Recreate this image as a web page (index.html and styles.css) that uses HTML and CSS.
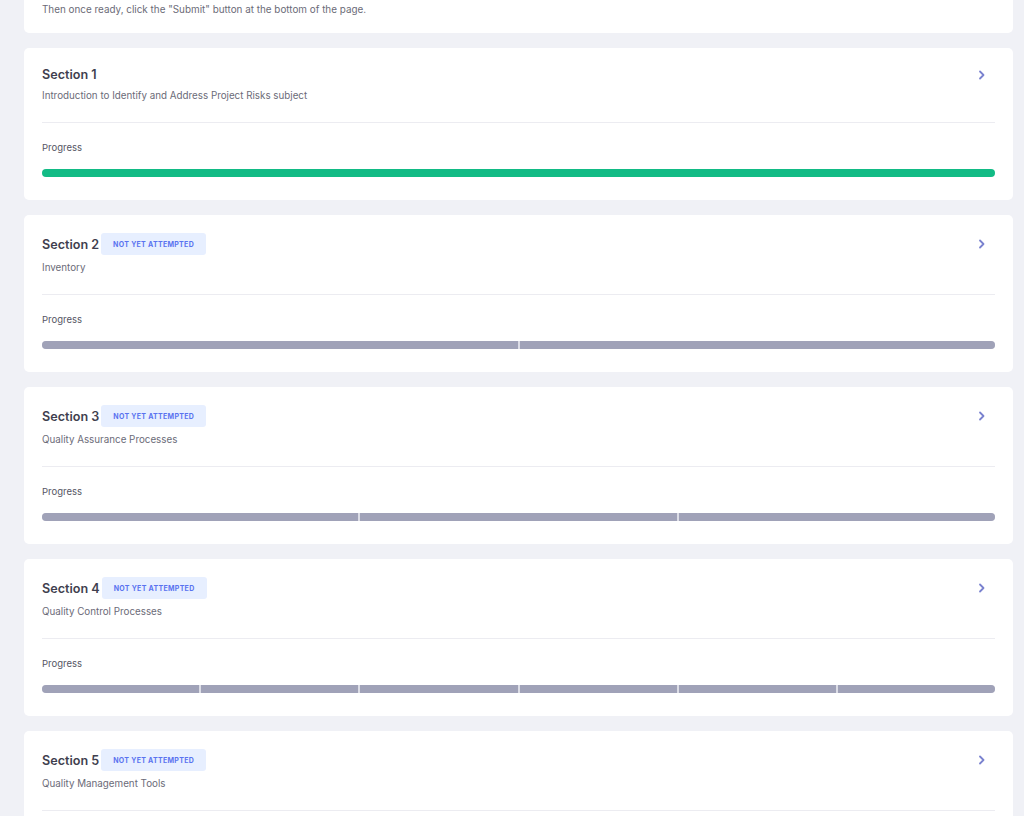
FILE: index.html
```html
<!DOCTYPE html>
<html>
<head>
  <meta charset="utf-8">
  <title>Sections</title>
  <link rel="stylesheet" href="styles.css">
</head>
<body>
<main class="page">

  <div class="card intro">
    <p>Then once ready, click the "Submit" button at the bottom of the page.</p>
  </div>

  <div class="card section">
    <div class="section-head">
      <h3>Section 1</h3>
      <svg class="chevron" viewBox="0 0 8 10" width="8" height="10"><path d="M2 1.5 L5.5 5 L2 8.5"/></svg>
    </div>
    <p class="section-sub">Introduction to Identify and Address Project Risks subject</p>
    <hr>
    <div class="progress-label">Progress</div>
    <div class="bar">
      <span class="seg done"></span>
    </div>
  </div>

  <div class="card section">
    <div class="section-head">
      <h3>Section 2</h3>
      <span class="badge">Not yet attempted</span>
      <svg class="chevron" viewBox="0 0 8 10" width="8" height="10"><path d="M2 1.5 L5.5 5 L2 8.5"/></svg>
    </div>
    <p class="section-sub">Inventory</p>
    <hr>
    <div class="progress-label">Progress</div>
    <div class="bar">
      <span class="seg"></span><span class="seg"></span>
    </div>
  </div>

  <div class="card section">
    <div class="section-head">
      <h3>Section 3</h3>
      <span class="badge">Not yet attempted</span>
      <svg class="chevron" viewBox="0 0 8 10" width="8" height="10"><path d="M2 1.5 L5.5 5 L2 8.5"/></svg>
    </div>
    <p class="section-sub">Quality Assurance Processes</p>
    <hr>
    <div class="progress-label">Progress</div>
    <div class="bar">
      <span class="seg"></span><span class="seg"></span><span class="seg"></span>
    </div>
  </div>

  <div class="card section">
    <div class="section-head">
      <h3>Section 4</h3>
      <span class="badge">Not yet attempted</span>
      <svg class="chevron" viewBox="0 0 8 10" width="8" height="10"><path d="M2 1.5 L5.5 5 L2 8.5"/></svg>
    </div>
    <p class="section-sub">Quality Control Processes</p>
    <hr>
    <div class="progress-label">Progress</div>
    <div class="bar">
      <span class="seg"></span><span class="seg"></span><span class="seg"></span>
      <span class="seg"></span><span class="seg"></span><span class="seg"></span>
    </div>
  </div>

  <div class="card section">
    <div class="section-head">
      <h3>Section 5</h3>
      <span class="badge">Not yet attempted</span>
      <svg class="chevron" viewBox="0 0 8 10" width="8" height="10"><path d="M2 1.5 L5.5 5 L2 8.5"/></svg>
    </div>
    <p class="section-sub">Quality Management Tools</p>
    <hr>
  </div>

</main>
</body>
</html>
```

FILE: styles.css
```css
* { box-sizing: border-box; }

html, body { margin: 0; padding: 0; }

body {
  background: #f0f1f6;
  font-family: Inter, "Noto Sans", sans-serif;
  color: #3f3f4f;
}

.page {
  display: flex;
  flex-direction: column;
  gap: 15px;
  padding: 0 11px 40px 24px;
}

.card {
  background: #fff;
  border-radius: 5px;
}

/* intro card is scrolled partly out of view */
.intro {
  padding: 2px 18px 17px;
  border-top-left-radius: 0;
  border-top-right-radius: 0;
}
.intro p {
  margin: 0;
  font-size: 9.9px;
  line-height: 14px;
  color: #6b6b78;
}

.section {
  padding: 18px 18px 23px;
}

.section-head {
  display: flex;
  align-items: center;
  gap: 2px;
  min-height: 17px;
}
.section-head h3 {
  margin: 0;
  font-size: 12.6px;
  font-weight: 600;
  line-height: 17px;
  color: #3f3f4f;
}

.badge {
  height: 22px;
  display: inline-flex;
  align-items: center;
  padding: 0 12px;
  background: #e7efff;
  border-radius: 3px;
  color: #5a73f0;
  font-size: 7px;
  font-weight: 700;
  text-transform: uppercase;
  letter-spacing: 0.3px;
}

.chevron {
  margin-left: auto;
  margin-right: 9px;
  fill: none;
  stroke: #7a82cf;
  stroke-width: 1.8;
  stroke-linecap: round;
  stroke-linejoin: round;
}

.section-sub {
  margin: 5px 0 0;
  font-size: 9.8px;
  line-height: 16px;
  color: #6b6b78;
}

.section hr {
  margin: 18px 0 0;
  border: 0;
  border-top: 1px solid #ececf1;
}

.progress-label {
  margin-top: 18px;
  font-size: 9.5px;
  line-height: 14px;
  color: #555564;
}

.bar {
  display: flex;
  gap: 2px;
  margin-top: 14px;
  height: 8px;
  border-radius: 4px;
  overflow: hidden;
  background: #dcdde6;
}
.seg {
  flex: 1;
  background: #a0a2b8;
}
.seg.done {
  background: #12bb85;
}
```
